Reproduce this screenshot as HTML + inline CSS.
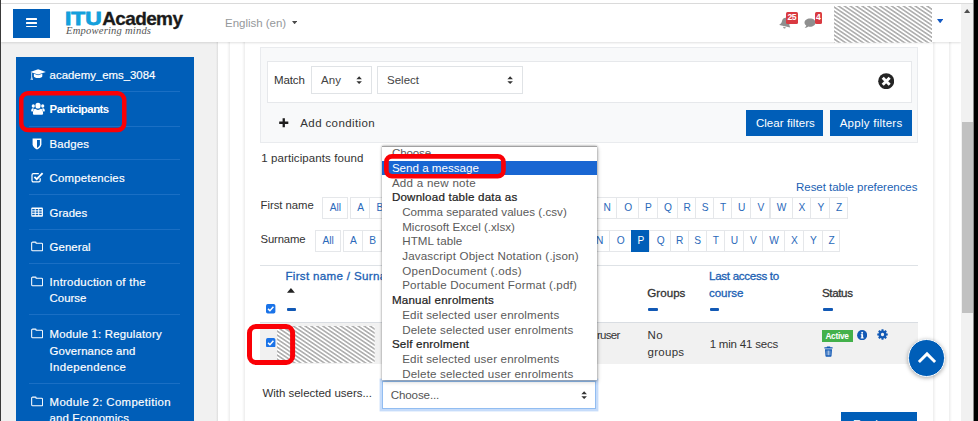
<!DOCTYPE html>
<html lang="en">
<head>
<meta charset="utf-8">
<title>Participants</title>
<style>
*{box-sizing:border-box;margin:0;padding:0}
html,body{width:978px;height:421px;overflow:hidden;background:#fff}
body{position:relative;font-family:"Liberation Sans",sans-serif;font-size:12px;color:#333}
.a{position:absolute}
.t{position:absolute;white-space:nowrap;line-height:16px}
.blue{color:#1b5fb4}
#bl{left:0;top:0;width:1.3px;height:421px;background:#3a3a3a;z-index:30}
#br{left:973px;top:0;width:5px;height:421px;background:linear-gradient(to right,#8a8a8a 0,#8a8a8a .5px,#000 .5px);z-index:30}
#topline{left:1px;top:3px;width:972px;height:1px;background:#dcdcdc}
#hdr{left:1px;top:4px;width:960px;height:37.5px;background:#fff;box-shadow:0 1px 2px rgba(0,0,0,.12);z-index:5}
#burger{left:13.3px;top:9px;width:36.4px;height:28.5px;background:#005eb8;z-index:6}
#burger i{position:absolute;left:12.7px;width:11px;height:1.6px;background:#fff;border-radius:.5px}
#sbbg{left:1px;top:41.5px;width:216.5px;height:380px;background:#f1f1f1}
#sb{left:16px;top:57.2px;width:177.7px;height:364px;background:#005eb8}
.sep{position:absolute;left:29.4px;width:151px;height:1px;background:#1a6fc4}
.vline{position:absolute;top:42px;width:3px;height:380px}
.vl{background:linear-gradient(to right,#fff,#ededed)}
.vr{background:linear-gradient(to left,#fff,#ededed)}
#fbox{left:260px;top:47px;width:658px;height:96.3px;background:#f8f9fa;border:1px solid #e9ebee}
#frow{left:267px;top:61px;width:644.6px;height:42.4px;background:#fff;border:1px solid #e6e8eb}
.sel{position:absolute;background:#fff;border:1px solid #e0e3e6}
.btn{position:absolute;background:#005eb8;height:26px;top:110.4px}
.ib{position:absolute;height:21px;border:1px solid #e5e7ea;background:#fff}
.ibt{position:absolute;white-space:nowrap;line-height:16px;font-size:10.2px;color:#2a69ba;transform:translateX(-50%)}

</style>
</head>
<body>
<div class="a" id="topline"></div>
<div class="a" id="hdr"></div>
<div class="a" id="burger"><i style="top:9.4px"></i><i style="top:13px"></i><i style="top:16.6px"></i></div>
<div class="t" id="logo" style="left:65.3px;top:7.1px;z-index:6;font-weight:bold;font-size:19px;line-height:24px;color:#1a1a1a"><span style="color:#14a0dc;display:inline-block;transform:scaleX(1.2);transform-origin:left;width:36.9px;-webkit-text-stroke:.8px #14a0dc">ITU</span><span style="letter-spacing:-.62px;-webkit-text-stroke:.3px #1a1a1a">Academy</span></div>
<div class="t" id="tag" style="left:66.00px;top:23.20px;font-size:10.60px;color:#555;font-family:'Liberation Serif',serif;font-style:italic;z-index:6;letter-spacing:0.193px">Empowering minds</div>
<div class="t" id="lang" style="left:225.00px;top:15.40px;font-size:11.50px;color:#95989b;z-index:6;letter-spacing:-0.016px">English (en)</div>
<svg class="a" style="left:291.90px;top:20.70px;z-index:6" width="5.20" height="3.30"><polygon points="0,0 5.20,0 2.60,3.30" fill="#4a4a4a"/></svg>
<svg class="a" id="bell" style="left:779.3px;top:16.4px;z-index:6" width="13.2" height="13.2" viewBox="0 0 12 12"><path d="M6 .6c-.5 0-.8.3-.8.8v.3C3.500 2.100 2.500 3.400 2.500 5c0 2-.6 3.100-1.500 3.900v.6h10v-.6C10.100 8.100 9.500 7 9.500 5c0-1.600-1-2.900-2.700-3.300v-.3c0-.5-.3-.8-.8-.8zM4.700 10.200c.1.700.6 1.200 1.300 1.200s1.200-.5 1.300-1.200z" fill="#8f8f8f" transform="rotate(13 6 6)"/></svg>
<div class="a" style="left:785.7px;top:12.4px;z-index:7;width:12.4px;height:11.4px;background:#d93a41;border-radius:1.5px;color:#fff;font-size:8.6px;font-weight:bold;line-height:11.4px;text-align:center;letter-spacing:-.3px">25</div>
<svg class="a" id="chat" style="left:804px;top:17.5px;z-index:6" width="12" height="11" viewBox="0 0 12 11"><path d="M6 .5C2.900.5.500 2.300.500 4.500c0 1.200.7 2.300 1.800 3-.2.900-.8 1.800-1.700 2.500 1.600 0 2.900-.6 3.800-1.400.5.100 1 .2 1.600.2 3.100 0 5.500-1.800 5.500-4.300S9.100.500 6 .500z" fill="#8f8f8f"/></svg>
<div class="a" style="left:814.7px;top:12.4px;z-index:7;width:7.5px;height:11.4px;background:#d93a41;border-radius:1.5px;color:#fff;font-size:8.6px;font-weight:bold;line-height:11.4px;text-align:center">4</div>
<svg class="a" style="left:833.5px;top:5.9px;z-index:6" width="98" height="36.7"><defs><pattern id="hz" width="8" height="3.31" patternUnits="userSpaceOnUse" patternTransform="rotate(34.1)"><rect width="8" height="3.31" fill="#fff"/><rect width="8" height="1.6" fill="#adadad"/></pattern></defs><rect width="98" height="36.7" fill="url(#hz)"/></svg>
<svg class="a" style="left:936.60px;top:19.10px;z-index:6" width="6.30" height="4.30"><polygon points="0,0 6.30,0 3.15,4.30" fill="#1259c3"/></svg>
<div class="a" style="left:961.3px;top:4px;width:11.7px;height:417px;background:#f1f1f1;z-index:8"></div>
<div class="a" style="left:962px;top:122.2px;width:10.6px;height:191px;background:#c1c1c1;z-index:9"></div>
<svg class="a" style="left:964.10px;top:9.00px;z-index:9" width="6.30" height="4.10"><polygon points="0,4.10 6.30,4.10 3.15,0" fill="#505050"/></svg>
<div class="a" id="sbbg"></div><div class="a" id="sb"></div>
<svg class="a" style="left:30.10px;top:68.52px;z-index:1" width="16.20" height="11.66" viewBox="0 0 15 11" preserveAspectRatio="none"><path d="M7.5.3 14.7 2.8 7.5 5.3.3 2.800zM3.600 4.600v2.200c0 1 1.700 1.800 3.900 1.800s3.900-.8 3.900-1.800V4.600L7.500 6z" fill="#fff"/><path d="M1.500 3.400v4.500l-.6 2.600h1.400l-.5-2.600" fill="none" stroke="#fff" stroke-width=".7"/></svg>
<div class="t" style="left:49.60px;top:66.75px;font-size:11.40px;color:#fff;letter-spacing:0.003px;-webkit-text-stroke:.18px #fff">academy_ems_3084</div>
<svg class="a" style="left:30.60px;top:102.40px;z-index:1" width="14.00" height="13.20" viewBox="0 0 14 12" preserveAspectRatio="none"><circle cx="7" cy="3.3" r="2.6" fill="#fff"/><path d="M2.800 11.500c-.6 0-.9-.4-.9-1 0-2.400 1-4.300 2.500-4.300.6.600 1.600 1 2.600 1s2-.4 2.600-1c1.500 0 2.500 1.900 2.500 4.300 0 .6-.3 1-.9 1z" fill="#fff"/><circle cx="2.3" cy="3.6" r="1.6" fill="#fff"/><circle cx="11.7" cy="3.6" r="1.6" fill="#fff"/><path d="M.2 8.300C.2 6.700.800 5.700 1.700 5.700c.5.400 1 .5 1.500.4-.7.700-1.200 1.500-1.400 2.600H.700C.400 8.700.2 8.600.2 8.300zM13.800 8.300c0-1.600-.6-2.600-1.500-2.600-.5.400-1 .5-1.500.4.700.7 1.200 1.500 1.400 2.600h1.100c.3 0 .5-.1.500-.4z" fill="#fff"/></svg>
<div class="t" style="left:49.60px;top:101.40px;font-size:11.40px;color:#fff;font-weight:bold;letter-spacing:-0.509px">Participants</div>
<svg class="a" style="left:32.10px;top:137.75px;z-index:1" width="10.00" height="12.00" viewBox="0 0 10 12" preserveAspectRatio="none"><path d="M.6.600h8.800v5.600c0 2.600-2.600 4.400-4.400 5.300C3.200 10.600.600 8.800.600 6.200z" fill="#fff"/><path d="M5 2v7.900C6.200 9.200 7.900 7.900 7.900 6.200V2z" fill="#005eb8"/></svg>
<div class="t" style="left:49.60px;top:135.75px;font-size:11.40px;color:#fff;letter-spacing:0.132px;-webkit-text-stroke:.18px #fff">Badges</div>
<svg class="a" style="left:31.10px;top:172.30px;z-index:1" width="13.00" height="11.00" viewBox="0 0 13 11" preserveAspectRatio="none"><path d="M9.200 6.300v2.200c0 .8-.6 1.400-1.400 1.400H2.400C1.600 9.900 1 9.300 1 8.500V3.100c0-.8.6-1.400 1.400-1.400h5.400" fill="none" stroke="#fff" stroke-width="1.200"/><path d="M3.400 4.800 5.700 7.100 11.600 1.200" fill="none" stroke="#fff" stroke-width="1.900"/></svg>
<div class="t" style="left:49.60px;top:170.20px;font-size:11.40px;color:#fff;letter-spacing:0.199px;-webkit-text-stroke:.18px #fff">Competencies</div>
<svg class="a" style="left:31.19px;top:206.94px;z-index:1" width="12.22" height="10.12" viewBox="0 0 13 11" preserveAspectRatio="none"><rect x=".3" y=".5" width="12.4" height="10" rx="1" fill="#fff"/><g fill="#005eb8"><rect x="1.300" y="2.200" width="2.700" height="1.500"/><rect x="5" y="2.200" width="2.700" height="1.500"/><rect x="8.700" y="2.200" width="2.700" height="1.500"/><rect x="1.300" y="4.800" width="2.700" height="1.500"/><rect x="5" y="4.800" width="2.700" height="1.500"/><rect x="8.700" y="4.800" width="2.700" height="1.500"/><rect x="1.300" y="7.400" width="2.700" height="1.500"/><rect x="5" y="7.400" width="2.700" height="1.500"/><rect x="8.700" y="7.400" width="2.700" height="1.500"/></g></svg>
<div class="t" style="left:49.60px;top:204.70px;font-size:11.40px;color:#fff;letter-spacing:0.028px;-webkit-text-stroke:.18px #fff">Grades</div>
<svg class="a" style="left:31.12px;top:240.90px;z-index:1" width="12.35" height="11.00" viewBox="0 0 13 11" preserveAspectRatio="none"><path d="M1.800 1.100h2.800c.5 0 .8.300.8.800v.4h5.700c.6 0 1.100.5 1.100 1.100v5.300c0 .6-.5 1.100-1.100 1.100H1.800c-.6 0-1.100-.5-1.100-1.100V2.200c0-.6.5-1.100 1.100-1.100z" fill="none" stroke="#fff" stroke-width="1.100"/></svg>
<div class="t" style="left:49.60px;top:238.80px;font-size:11.40px;color:#fff;letter-spacing:0.078px;-webkit-text-stroke:.18px #fff">General</div>
<svg class="a" style="left:31.12px;top:275.60px;z-index:1" width="12.35" height="11.00" viewBox="0 0 13 11" preserveAspectRatio="none"><path d="M1.800 1.100h2.800c.5 0 .8.300.8.800v.4h5.700c.6 0 1.100.5 1.100 1.100v5.300c0 .6-.5 1.100-1.100 1.100H1.800c-.6 0-1.100-.5-1.100-1.100V2.200c0-.6.5-1.100 1.100-1.100z" fill="none" stroke="#fff" stroke-width="1.100"/></svg>
<div class="t" style="left:49.60px;top:273.50px;font-size:11.40px;color:#fff;letter-spacing:0.267px;-webkit-text-stroke:.18px #fff">Introduction of the</div>
<div class="t" style="left:49.60px;top:290.20px;font-size:11.40px;color:#fff;letter-spacing:0.013px;-webkit-text-stroke:.18px #fff">Course</div>
<svg class="a" style="left:31.12px;top:328.00px;z-index:1" width="12.35" height="11.00" viewBox="0 0 13 11" preserveAspectRatio="none"><path d="M1.800 1.100h2.800c.5 0 .8.300.8.800v.4h5.700c.6 0 1.100.5 1.100 1.100v5.300c0 .6-.5 1.100-1.100 1.100H1.800c-.6 0-1.100-.5-1.100-1.100V2.200c0-.6.5-1.100 1.100-1.100z" fill="none" stroke="#fff" stroke-width="1.100"/></svg>
<div class="t" style="left:49.60px;top:325.90px;font-size:11.40px;color:#fff;letter-spacing:0.196px;-webkit-text-stroke:.18px #fff">Module 1: Regulatory</div>
<div class="t" style="left:49.60px;top:342.60px;font-size:11.40px;color:#fff;letter-spacing:0.113px;-webkit-text-stroke:.18px #fff">Governance and</div>
<div class="t" style="left:49.60px;top:359.30px;font-size:11.40px;color:#fff;letter-spacing:0.362px;-webkit-text-stroke:.18px #fff">Independence</div>
<svg class="a" style="left:31.12px;top:395.80px;z-index:1" width="12.35" height="11.00" viewBox="0 0 13 11" preserveAspectRatio="none"><path d="M1.800 1.100h2.800c.5 0 .8.300.8.800v.4h5.700c.6 0 1.100.5 1.100 1.100v5.300c0 .6-.5 1.100-1.100 1.100H1.800c-.6 0-1.100-.5-1.100-1.100V2.200c0-.6.5-1.100 1.100-1.100z" fill="none" stroke="#fff" stroke-width="1.100"/></svg>
<div class="t" style="left:49.60px;top:393.70px;font-size:11.40px;color:#fff;letter-spacing:0.352px;-webkit-text-stroke:.18px #fff">Module 2: Competition</div>
<div class="t" style="left:49.60px;top:410.40px;font-size:11.40px;color:#fff;letter-spacing:0.117px;-webkit-text-stroke:.18px #fff">and Economics</div>
<div class="sep" style="top:90.50px"></div>
<div class="sep" style="top:125.50px"></div>
<div class="sep" style="top:159.30px"></div>
<div class="sep" style="top:194.30px"></div>
<div class="sep" style="top:228.70px"></div>
<div class="sep" style="top:263.10px"></div>
<div class="sep" style="top:314.10px"></div>
<div class="sep" style="top:382.90px"></div>
<svg class="a" style="left:17.50px;top:90.10px;z-index:20" width="109.50" height="43.30"><rect x="3.25" y="3.25" width="103.00" height="36.80" rx="6.75" fill="none" stroke="#fa0006" stroke-width="4.50"/></svg>
<div class="vline vl" style="left:226.5px"></div><div class="vline vl" style="left:242.3px"></div><div class="vline vr" style="left:933px"></div><div class="vline vr" style="left:949px"></div>
<div class="a" style="left:215.5px;top:41.5px;width:2px;height:380px;background:linear-gradient(to right,#f1f1f1,#dcdcdc)"></div>
<div class="a" id="fbox"></div><div class="a" id="frow"></div>
<div class="t" style="left:273.90px;top:71.90px;font-size:11.50px;letter-spacing:-0.082px">Match</div>
<div class="sel" style="left:311px;top:66.4px;width:60.8px;height:27.6px"></div>
<div class="t" style="left:321.00px;top:71.90px;font-size:11.50px;color:#444;letter-spacing:0.086px">Any</div>
<div class="sel" style="left:377px;top:66.4px;width:145.8px;height:27.6px"></div>
<div class="t" style="left:387.00px;top:71.90px;font-size:11.50px;color:#444;letter-spacing:0.006px">Select</div>
<svg class="a" style="left:355.7px;top:76.3px" width="6.3" height="8.4" viewBox="0 0 5 8" preserveAspectRatio="none"><path d="M2.500.3 4.700 3.100H.3zM2.500 7.700.3 4.900h4.400z" fill="#333"/></svg>
<svg class="a" style="left:506.7px;top:76.3px" width="6.3" height="8.4" viewBox="0 0 5 8" preserveAspectRatio="none"><path d="M2.500.3 4.700 3.100H.3zM2.500 7.700.3 4.900h4.400z" fill="#333"/></svg>
<svg class="a" style="left:877.8px;top:72.8px" width="16.4" height="16.4" viewBox="0 0 16 16"><circle cx="8" cy="8" r="7.8" fill="#242424"/><path d="M4.600 4.600 11.400 11.400M11.400 4.600 4.600 11.400" stroke="#fff" stroke-width="2.900"/></svg>
<svg class="a" style="left:279.1px;top:118.3px" width="9.5" height="9.5" viewBox="0 0 9.5 9.5"><path d="M4.750.2V9.300M.2 4.750H9.300" stroke="#1d1d1d" stroke-width="2.300"/></svg>
<div class="t" style="left:300.30px;top:114.90px;font-size:11.50px;letter-spacing:0.383px">Add condition</div>
<div class="btn" style="left:746.4px;width:77.1px"></div>
<div class="btn" style="left:830px;width:81.6px"></div>
<div class="t" style="left:755.90px;top:115.30px;font-size:11.50px;color:#fff;letter-spacing:0.062px">Clear filters</div>
<div class="t" style="left:839.70px;top:115.30px;font-size:11.50px;color:#fff;letter-spacing:0.255px">Apply filters</div>
<div class="t" style="left:261.20px;top:149.70px;font-size:11.50px;letter-spacing:0.096px">1 participants found</div>
<div class="t blue" id="reset" style="left:796.00px;top:179.00px;font-size:11.50px;letter-spacing:-0.028px">Reset table preferences</div>
<div class="t" style="left:260.50px;top:197.00px;font-size:11.30px;letter-spacing:-0.007px">First name</div>
<div class="t" style="left:260.50px;top:230.50px;font-size:11.30px;letter-spacing:-0.141px">Surname</div>
<div class="ib" style="left:321.8px;top:196.5px;width:26.0px;height:22.0px"></div>
<div class="ibt" style="left:335.3px;top:199.60px">All</div>
<div class="ib" style="left:349.8px;top:196.5px;width:20.6px;height:22.0px"></div>
<div class="ibt" style="left:360.6px;top:199.60px">A</div>
<div class="ib" style="left:369.4px;top:196.5px;width:19.8px;height:22.0px"></div>
<div class="ibt" style="left:379.8px;top:199.60px">B</div>
<div class="ib" style="left:388.2px;top:196.5px;width:21.2px;height:22.0px"></div>
<div class="ibt" style="left:399.3px;top:199.60px">C</div>
<div class="ib" style="left:408.4px;top:196.5px;width:21.8px;height:22.0px"></div>
<div class="ibt" style="left:419.8px;top:199.60px">D</div>
<div class="ib" style="left:429.2px;top:196.5px;width:19.2px;height:22.0px"></div>
<div class="ibt" style="left:439.3px;top:199.60px">E</div>
<div class="ib" style="left:447.4px;top:196.5px;width:18.6px;height:22.0px"></div>
<div class="ibt" style="left:457.2px;top:199.60px">F</div>
<div class="ib" style="left:465.0px;top:196.5px;width:22.8px;height:22.0px"></div>
<div class="ibt" style="left:476.9px;top:199.60px">G</div>
<div class="ib" style="left:486.8px;top:196.5px;width:21.8px;height:22.0px"></div>
<div class="ibt" style="left:498.2px;top:199.60px">H</div>
<div class="ib" style="left:507.6px;top:196.5px;width:14.0px;height:22.0px"></div>
<div class="ibt" style="left:515.0px;top:199.60px">I</div>
<div class="ib" style="left:520.5px;top:196.5px;width:16.6px;height:22.0px"></div>
<div class="ibt" style="left:529.3px;top:199.60px">J</div>
<div class="ib" style="left:536.1px;top:196.5px;width:20.2px;height:22.0px"></div>
<div class="ibt" style="left:546.7px;top:199.60px">K</div>
<div class="ib" style="left:555.3px;top:196.5px;width:18.1px;height:22.0px"></div>
<div class="ibt" style="left:564.9px;top:199.60px">L</div>
<div class="ib" style="left:572.4px;top:196.5px;width:24.9px;height:22.0px"></div>
<div class="ibt" style="left:585.4px;top:199.60px">M</div>
<div class="ib" style="left:596.3px;top:196.5px;width:20.8px;height:22.0px"></div>
<div class="ibt" style="left:607.2px;top:199.60px">N</div>
<div class="ib" style="left:616.1px;top:196.5px;width:23.1px;height:22.0px"></div>
<div class="ibt" style="left:628.2px;top:199.60px">O</div>
<div class="ib" style="left:638.2px;top:196.5px;width:19.6px;height:22.0px"></div>
<div class="ibt" style="left:648.5px;top:199.60px">P</div>
<div class="ib" style="left:656.8px;top:196.5px;width:21.5px;height:22.0px"></div>
<div class="ibt" style="left:668.0px;top:199.60px">Q</div>
<div class="ib" style="left:677.3px;top:196.5px;width:18.8px;height:22.0px"></div>
<div class="ibt" style="left:687.2px;top:199.60px">R</div>
<div class="ib" style="left:695.1px;top:196.5px;width:19.1px;height:22.0px"></div>
<div class="ibt" style="left:705.2px;top:199.60px">S</div>
<div class="ib" style="left:713.2px;top:196.5px;width:19.1px;height:22.0px"></div>
<div class="ibt" style="left:723.2px;top:199.60px">T</div>
<div class="ib" style="left:731.3px;top:196.5px;width:20.1px;height:22.0px"></div>
<div class="ibt" style="left:741.8px;top:199.60px">U</div>
<div class="ib" style="left:750.4px;top:196.5px;width:20.1px;height:22.0px"></div>
<div class="ibt" style="left:761.0px;top:199.60px">V</div>
<div class="ib" style="left:769.5px;top:196.5px;width:23.1px;height:22.0px"></div>
<div class="ibt" style="left:781.5px;top:199.60px">W</div>
<div class="ib" style="left:791.6px;top:196.5px;width:19.6px;height:22.0px"></div>
<div class="ibt" style="left:801.9px;top:199.60px">X</div>
<div class="ib" style="left:810.2px;top:196.5px;width:20.2px;height:22.0px"></div>
<div class="ibt" style="left:820.8px;top:199.60px">Y</div>
<div class="ib" style="left:829.4px;top:196.5px;width:18.5px;height:22.0px"></div>
<div class="ibt" style="left:839.1px;top:199.60px">Z</div>
<div class="ib" style="left:314.7px;top:230.4px;width:26.0px;height:22.0px"></div>
<div class="ibt" style="left:328.2px;top:233.10px">All</div>
<div class="ib" style="left:342.7px;top:230.4px;width:20.6px;height:22.0px"></div>
<div class="ibt" style="left:353.5px;top:233.10px">A</div>
<div class="ib" style="left:362.3px;top:230.4px;width:19.8px;height:22.0px"></div>
<div class="ibt" style="left:372.7px;top:233.10px">B</div>
<div class="ib" style="left:381.1px;top:230.4px;width:21.2px;height:22.0px"></div>
<div class="ibt" style="left:392.2px;top:233.10px">C</div>
<div class="ib" style="left:401.3px;top:230.4px;width:21.7px;height:22.0px"></div>
<div class="ibt" style="left:412.7px;top:233.10px">D</div>
<div class="ib" style="left:422.0px;top:230.4px;width:19.1px;height:22.0px"></div>
<div class="ibt" style="left:432.1px;top:233.10px">E</div>
<div class="ib" style="left:440.2px;top:230.4px;width:18.6px;height:22.0px"></div>
<div class="ibt" style="left:450.0px;top:233.10px">F</div>
<div class="ib" style="left:457.8px;top:230.4px;width:22.8px;height:22.0px"></div>
<div class="ibt" style="left:469.7px;top:233.10px">G</div>
<div class="ib" style="left:479.5px;top:230.4px;width:21.7px;height:22.0px"></div>
<div class="ibt" style="left:490.9px;top:233.10px">H</div>
<div class="ib" style="left:500.3px;top:230.4px;width:14.0px;height:22.0px"></div>
<div class="ibt" style="left:507.7px;top:233.10px">I</div>
<div class="ib" style="left:513.2px;top:230.4px;width:16.5px;height:22.0px"></div>
<div class="ibt" style="left:522.0px;top:233.10px">J</div>
<div class="ib" style="left:528.8px;top:230.4px;width:20.2px;height:22.0px"></div>
<div class="ibt" style="left:539.3px;top:233.10px">K</div>
<div class="ib" style="left:547.9px;top:230.4px;width:18.1px;height:22.0px"></div>
<div class="ibt" style="left:557.5px;top:233.10px">L</div>
<div class="ib" style="left:565.0px;top:230.4px;width:24.8px;height:22.0px"></div>
<div class="ibt" style="left:577.9px;top:233.10px">M</div>
<div class="ib" style="left:588.8px;top:230.4px;width:20.8px;height:22.0px"></div>
<div class="ibt" style="left:599.8px;top:233.10px">N</div>
<div class="ib" style="left:608.6px;top:230.4px;width:23.1px;height:22.0px"></div>
<div class="ibt" style="left:620.7px;top:233.10px">O</div>
<div class="ib" style="left:630.8px;top:230.4px;width:19.6px;height:22.0px;background:#005eb8;border-color:#005eb8"></div>
<div class="ibt" style="left:641.0px;top:233.10px;color:#fff">P</div>
<div class="ib" style="left:649.3px;top:230.4px;width:21.5px;height:22.0px"></div>
<div class="ibt" style="left:660.6px;top:233.10px">Q</div>
<div class="ib" style="left:669.8px;top:230.4px;width:18.8px;height:22.0px"></div>
<div class="ibt" style="left:679.8px;top:233.10px">R</div>
<div class="ib" style="left:687.6px;top:230.4px;width:19.1px;height:22.0px"></div>
<div class="ibt" style="left:697.7px;top:233.10px">S</div>
<div class="ib" style="left:705.8px;top:230.4px;width:19.1px;height:22.0px"></div>
<div class="ibt" style="left:715.8px;top:233.10px">T</div>
<div class="ib" style="left:723.8px;top:230.4px;width:20.1px;height:22.0px"></div>
<div class="ibt" style="left:734.4px;top:233.10px">U</div>
<div class="ib" style="left:742.9px;top:230.4px;width:20.1px;height:22.0px"></div>
<div class="ibt" style="left:753.5px;top:233.10px">V</div>
<div class="ib" style="left:762.0px;top:230.4px;width:23.1px;height:22.0px"></div>
<div class="ibt" style="left:774.1px;top:233.10px">W</div>
<div class="ib" style="left:784.1px;top:230.4px;width:19.6px;height:22.0px"></div>
<div class="ibt" style="left:794.5px;top:233.10px">X</div>
<div class="ib" style="left:802.8px;top:230.4px;width:20.2px;height:22.0px"></div>
<div class="ibt" style="left:813.3px;top:233.10px">Y</div>
<div class="ib" style="left:821.9px;top:230.4px;width:18.5px;height:22.0px"></div>
<div class="ibt" style="left:831.7px;top:233.10px">Z</div>
<div class="a" style="left:260px;top:264.5px;width:658px;height:1px;background:#dee2e6"></div>
<div class="t blue" style="left:285.40px;top:268.30px;font-size:11.60px;letter-spacing:0.317px;-webkit-text-stroke:.3px #1b5fb4">First name / Surname</div>
<svg class="a" style="left:287.40px;top:288.00px;z-index:1" width="7.90" height="4.80"><polygon points="0,4.80 7.90,4.80 3.95,0" fill="#222"/></svg>
<svg class="a" style="left:266.4px;top:304.4px" width="9.4" height="9.4" viewBox="0 0 10 10"><rect width="10" height="10" rx="1.8" fill="#1a73e8"/><path d="M2.200 5.200 4.200 7.200 7.900 3" fill="none" stroke="#fff" stroke-width="1.600"/></svg>
<div class="a" style="left:286.6px;top:307.9px;width:9.5px;height:2.8px;background:#1259b5;border-radius:1px"></div>
<div class="t" style="left:647.30px;top:285.10px;font-size:11.60px;color:#333;letter-spacing:0.014px;-webkit-text-stroke:.3px #333">Groups</div>
<div class="a" style="left:648.3px;top:307.9px;width:9.5px;height:2.8px;background:#1259b5;border-radius:1px"></div>
<div class="t blue" style="left:709.00px;top:268.20px;font-size:11.60px;letter-spacing:-0.301px;-webkit-text-stroke:.3px #1b5fb4">Last access to</div>
<div class="t blue" style="left:709.00px;top:285.10px;font-size:11.60px;letter-spacing:-0.062px;-webkit-text-stroke:.3px #1b5fb4">course</div>
<div class="a" style="left:709.7px;top:307.9px;width:9.5px;height:2.8px;background:#1259b5;border-radius:1px"></div>
<div class="t" style="left:822.00px;top:285.10px;font-size:11.60px;color:#333;letter-spacing:-0.375px;-webkit-text-stroke:.3px #333">Status</div>
<div class="a" style="left:823px;top:307.9px;width:9.5px;height:2.8px;background:#1259b5;border-radius:1px"></div>
<div class="a" style="left:260px;top:322px;width:658px;height:1.3px;background:#d9dde2"></div>
<div class="a" style="left:260px;top:323.2px;width:657.7px;height:40.5px;background:#f1f1f1"></div>
<svg class="a" style="left:266.2px;top:338px" width="9.4" height="9.4" viewBox="0 0 10 10"><rect width="10" height="10" rx="1.8" fill="#1a73e8"/><path d="M2.200 5.200 4.200 7.200 7.900 3" fill="none" stroke="#fff" stroke-width="1.600"/></svg>
<svg class="a" style="left:277.1px;top:326px;z-index:1" width="97.6" height="36.9"><defs><pattern id="hz2" width="8" height="3.31" patternUnits="userSpaceOnUse" patternTransform="rotate(34.1)"><rect width="8" height="3.31" fill="#fff"/><rect width="8" height="1.6" fill="#adadad"/></pattern></defs><rect width="97.6" height="36.9" fill="url(#hz2)"/></svg>
<div class="t" style="left:597.00px;top:327.30px;font-size:11.50px;letter-spacing:-0.726px">ruser</div>
<div class="t" style="left:647.60px;top:327.30px;font-size:11.50px;letter-spacing:0.297px">No</div>
<div class="t" style="left:647.60px;top:344.20px;font-size:11.50px;letter-spacing:0.266px">groups</div>
<div class="t" style="left:709.70px;top:335.70px;font-size:11.50px;letter-spacing:-0.204px">1 min 41 secs</div>
<div class="a" style="left:821.9px;top:330px;width:31px;height:12.4px;background:#43b14b"></div>
<div class="t" style="left:825.40px;top:328.00px;font-size:8.30px;color:#fff;font-weight:bold;letter-spacing:-0.261px">Active</div>
<svg class="a" style="left:856.5px;top:329.6px" width="10.3" height="10.3" viewBox="0 0 11 11"><circle cx="5.500" cy="5.500" r="5.400" fill="#1259b5"/><rect x="4.600" y="4.600" width="1.900" height="4" fill="#fff"/><rect x="4" y="4.600" width="2" height="1" fill="#fff"/><rect x="3.900" y="8" width="3.300" height="1" fill="#fff"/><circle cx="5.500" cy="2.900" r="1.050" fill="#fff"/></svg>
<svg class="a" style="left:877.4px;top:329.3px" width="11" height="11" viewBox="0 0 12 12"><path d="M6 1.600A4.400 4.400 0 1 0 6 10.400 4.400 4.400 0 1 0 6 1.600zM6 4.200A1.800 1.800 0 1 1 6 7.800 1.800 1.800 0 1 1 6 4.200z" fill="#1259b5" fill-rule="evenodd"/><g stroke="#1259b5" stroke-width="2.200"><path d="M6 .3V2.200M6 9.800V11.700M.3 6H2.200M9.800 6H11.700M1.970 1.970 3.300 3.300M8.700 8.700 10.030 10.030M1.970 10.030 3.300 8.700M8.700 3.300 10.030 1.970"/></g></svg>
<svg class="a" style="left:823.6px;top:346.3px" width="9" height="11" viewBox="0 0 9 11"><path d="M3 .5h3l.4.800H8.600v1.200H.4V1.300H2.600zM1 3.200h7l-.5 6.900c0 .4-.4.700-.8.700H2.300c-.4 0-.8-.3-.8-.7z" fill="#1259b5"/><path d="M3.100 4.500v4.800M4.500 4.500v4.800M5.900 4.500v4.800" stroke="#fff" stroke-width=".6"/></svg>
<svg class="a" style="left:245.60px;top:322.90px;z-index:20" width="50.10" height="43.00"><rect x="3.50" y="3.50" width="43.10" height="36.00" rx="6.50" fill="none" stroke="#fa0006" stroke-width="5.00"/></svg>
<div class="t" style="left:262.40px;top:385.40px;font-size:11.50px;letter-spacing:-0.016px">With selected users...</div>
<div class="a" style="left:381.6px;top:380.8px;width:214.5px;height:27.8px;background:#fff;border:1px solid #92bdf1;box-shadow:0 0 0 2.4px rgba(160,197,246,.6)"></div>
<div class="t" style="left:390.70px;top:387.00px;font-size:11.60px;color:#555;letter-spacing:-0.128px">Choose...</div>
<svg class="a" style="left:581.2px;top:390.7px" width="6.3" height="8.4" viewBox="0 0 5 8" preserveAspectRatio="none"><path d="M2.500.3 4.700 3.100H.3zM2.500 7.700.3 4.900h4.400z" fill="#333"/></svg>
<div class="a" id="dd" style="left:382.4px;top:146px;width:214.2px;height:234.2px;background:#fff;border-top:1px solid #a2a2a2;box-shadow:0 0 2.5px rgba(0,0,0,.4),1px 2px 4px rgba(0,0,0,.18);z-index:12;overflow:hidden">
<div class="t" style="left:9.50px;top:-1.91px;font-size:11.60px;color:#5a5a5a;letter-spacing:-0.128px">Choose...</div>
<div class="a" style="left:0;top:14.00px;width:214.2px;height:13.9px;background:#1966d2"></div>
<div class="t" style="left:9.50px;top:12.80px;font-size:11.60px;color:#fff;letter-spacing:-0.001px">Send a message</div>
<div class="t" style="left:9.50px;top:27.51px;font-size:11.60px;color:#5a5a5a;letter-spacing:0.248px">Add a new note</div>
<div class="t" style="left:9.50px;top:42.22px;font-size:11.60px;color:#222;letter-spacing:0.201px;-webkit-text-stroke:.22px #222">Download table data as</div>
<div class="t" style="left:19.80px;top:56.93px;font-size:11.60px;color:#5a5a5a;letter-spacing:0.033px">Comma separated values (.csv)</div>
<div class="t" style="left:19.80px;top:71.64px;font-size:11.60px;color:#5a5a5a;letter-spacing:-0.002px">Microsoft Excel (.xlsx)</div>
<div class="t" style="left:19.80px;top:86.35px;font-size:11.60px;color:#5a5a5a;letter-spacing:0.067px">HTML table</div>
<div class="t" style="left:19.80px;top:101.06px;font-size:11.60px;color:#5a5a5a;letter-spacing:0.171px">Javascript Object Notation (.json)</div>
<div class="t" style="left:19.80px;top:115.77px;font-size:11.60px;color:#5a5a5a;letter-spacing:0.302px">OpenDocument (.ods)</div>
<div class="t" style="left:19.80px;top:130.48px;font-size:11.60px;color:#5a5a5a;letter-spacing:0.174px">Portable Document Format (.pdf)</div>
<div class="t" style="left:9.50px;top:145.19px;font-size:11.60px;color:#222;letter-spacing:0.199px;-webkit-text-stroke:.22px #222">Manual enrolments</div>
<div class="t" style="left:19.80px;top:159.90px;font-size:11.60px;color:#5a5a5a;letter-spacing:0.156px">Edit selected user enrolments</div>
<div class="t" style="left:19.80px;top:174.61px;font-size:11.60px;color:#5a5a5a;letter-spacing:0.158px">Delete selected user enrolments</div>
<div class="t" style="left:9.50px;top:189.32px;font-size:11.60px;color:#222;letter-spacing:0.187px;-webkit-text-stroke:.22px #222">Self enrolment</div>
<div class="t" style="left:19.80px;top:204.03px;font-size:11.60px;color:#5a5a5a;letter-spacing:0.156px">Edit selected user enrolments</div>
<div class="t" style="left:19.80px;top:218.74px;font-size:11.60px;color:#5a5a5a;letter-spacing:0.158px">Delete selected user enrolments</div>
</div>
<svg class="a" style="left:382.60px;top:153.40px;z-index:20" width="123.80" height="26.60"><rect x="3.35" y="3.35" width="117.10" height="19.90" rx="5.65" fill="none" stroke="#fa0006" stroke-width="4.70"/></svg>
<div class="a" style="left:907.6px;top:339px;width:37.6px;height:37.6px;border-radius:50%;background:#005eb8;border:1.9px solid #fff;box-shadow:0 1px 4px rgba(0,0,0,.35);z-index:10"></div>
<svg class="a" style="left:916.6px;top:351.2px;z-index:11" width="20" height="13" viewBox="0 0 20 13"><path d="M1.900 11 10 2.900 18.100 11" fill="none" stroke="#fff" stroke-width="2.900"/></svg>
<div class="a" style="left:841.4px;top:412.1px;width:76px;height:20px;background:#005eb8"></div>
<div class="t" style="left:853.00px;top:415.50px;font-size:11.50px;color:#fff;letter-spacing:-0.517px">Enrol users</div>
<div class="a" id="bl"></div><div class="a" id="br"></div>
</body>
</html>
